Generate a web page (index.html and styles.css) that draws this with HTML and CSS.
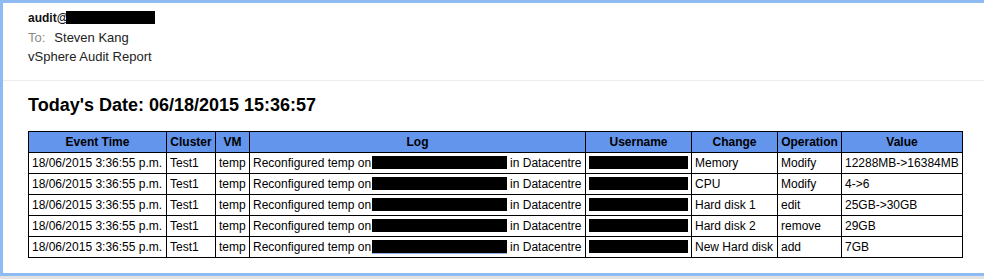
FILE: index.html
```html
<!doctype html>
<html>
<head>
<meta charset="utf-8">
<title>vSphere Audit Report</title>
<link rel="stylesheet" href="styles.css">
</head>
<body>
<div class="mail">
	<div class="mail-head">
		<div class="from">audit@<span class="redact redact-from"></span></div>
		<div class="to"><span class="to-label">To:</span>Steven Kang</div>
		<div class="subject">vSphere Audit Report</div>
	</div>
	<div class="mail-body">
		<h1 class="today">Today's Date: 06/18/2015 15:36:57</h1>
		<table class="audit" cellpadding="0" cellspacing="0">
		<colgroup>
			<col class="c-time"><col class="c-cluster"><col class="c-vm"><col class="c-log">
			<col class="c-user"><col class="c-change"><col class="c-op"><col class="c-value">
		</colgroup>
		<tr>
			<th>Event Time</th><th>Cluster</th><th>VM</th><th>Log</th>
			<th>Username</th><th>Change</th><th>Operation</th><th>Value</th>
		</tr>
		<tr>
			<td>18/06/2015 3:36:55 p.m.</td><td>Test1</td><td>temp</td>
			<td>Reconfigured temp on<span class="redact redact-host"></span>in Datacentre</td>
			<td><span class="redact redact-user"></span></td>
			<td>Memory</td><td>Modify</td><td>12288MB-&gt;16384MB</td>
		</tr>
		<tr>
			<td>18/06/2015 3:36:55 p.m.</td><td>Test1</td><td>temp</td>
			<td>Reconfigured temp on<span class="redact redact-host"></span>in Datacentre</td>
			<td><span class="redact redact-user"></span></td>
			<td>CPU</td><td>Modify</td><td>4-&gt;6</td>
		</tr>
		<tr>
			<td>18/06/2015 3:36:55 p.m.</td><td>Test1</td><td>temp</td>
			<td>Reconfigured temp on<span class="redact redact-host"></span>in Datacentre</td>
			<td><span class="redact redact-user"></span></td>
			<td>Hard disk 1</td><td>edit</td><td>25GB-&gt;30GB</td>
		</tr>
		<tr>
			<td>18/06/2015 3:36:55 p.m.</td><td>Test1</td><td>temp</td>
			<td>Reconfigured temp on<span class="redact redact-host"></span>in Datacentre</td>
			<td><span class="redact redact-user"></span></td>
			<td>Hard disk 2</td><td>remove</td><td>29GB</td>
		</tr>
		<tr>
			<td>18/06/2015 3:36:55 p.m.</td><td>Test1</td><td>temp</td>
			<td>Reconfigured temp on<span class="redact redact-host redact-link"></span>in Datacentre</td>
			<td><span class="redact redact-user"></span></td>
			<td>New Hard disk</td><td>add</td><td>7GB</td>
		</tr>
		</table>
	</div>
</div>
<div class="shade"></div>
</body>
</html>
```

FILE: styles.css
```css
body
{
	margin:0px;
	padding:0px;
	background:#FFF;
	font-family:"Liberation Sans", Arial, Helvetica, sans-serif;
	color:#000;
}
.mail
{
	border-left:3px #8DBBF2 solid;
	border-top:3px #8DBBF2 solid;
	border-bottom:3px #8DBBF2 solid;
	background:#FFF;
}
.mail-head
{
	padding:6px 0px 14px 25px;
	font-size:13px;
	line-height:19px;
	color:#222;
	border-bottom:1px #EFEBEB solid;
}
.from
{
	font-size:12px;
	font-weight:bold;
	color:#111;
}
.to-label
{
	color:#8A8A8A;
	margin-right:9px;
}
.mail-body
{
	padding:13px 0px 15px 25px;
}
.today
{
	margin:0px 0px 15px 0px;
	font-size:18px;
	line-height:22px;
	font-weight:bold;
}
.audit
{
	border-collapse:collapse;
	table-layout:fixed;
	width:935px;
	font-size:12px;
}
.audit th, .audit td
{
	border:1px #000 solid;
	padding:2px 3px;
	line-height:16px;
	white-space:nowrap;
	overflow:hidden;
}
.audit th
{
	background:#6495ED;
	font-weight:bold;
	text-align:center;
}
.c-time { width:138px; }
.c-cluster { width:49px; }
.c-vm { width:34px; }
.c-log { width:336px; }
.c-user { width:106px; }
.c-change { width:86px; }
.c-op { width:64px; }
.c-value { width:121px; }
.redact
{
	display:inline-block;
	background:#000;
	vertical-align:-2px;
}
.redact-from
{
	width:89px;
	height:13px;
	margin-left:-2px;
}
.redact-host
{
	width:135px;
	height:13px;
	margin:0px 3px 0px 1px;
}
.redact-link
{
	box-shadow:0px 1px 0px #8DB4E8;
}
.redact-user
{
	width:99px;
	height:13px;
}
.shade
{
	height:3px;
	background:#E2E2E2;
}
```
